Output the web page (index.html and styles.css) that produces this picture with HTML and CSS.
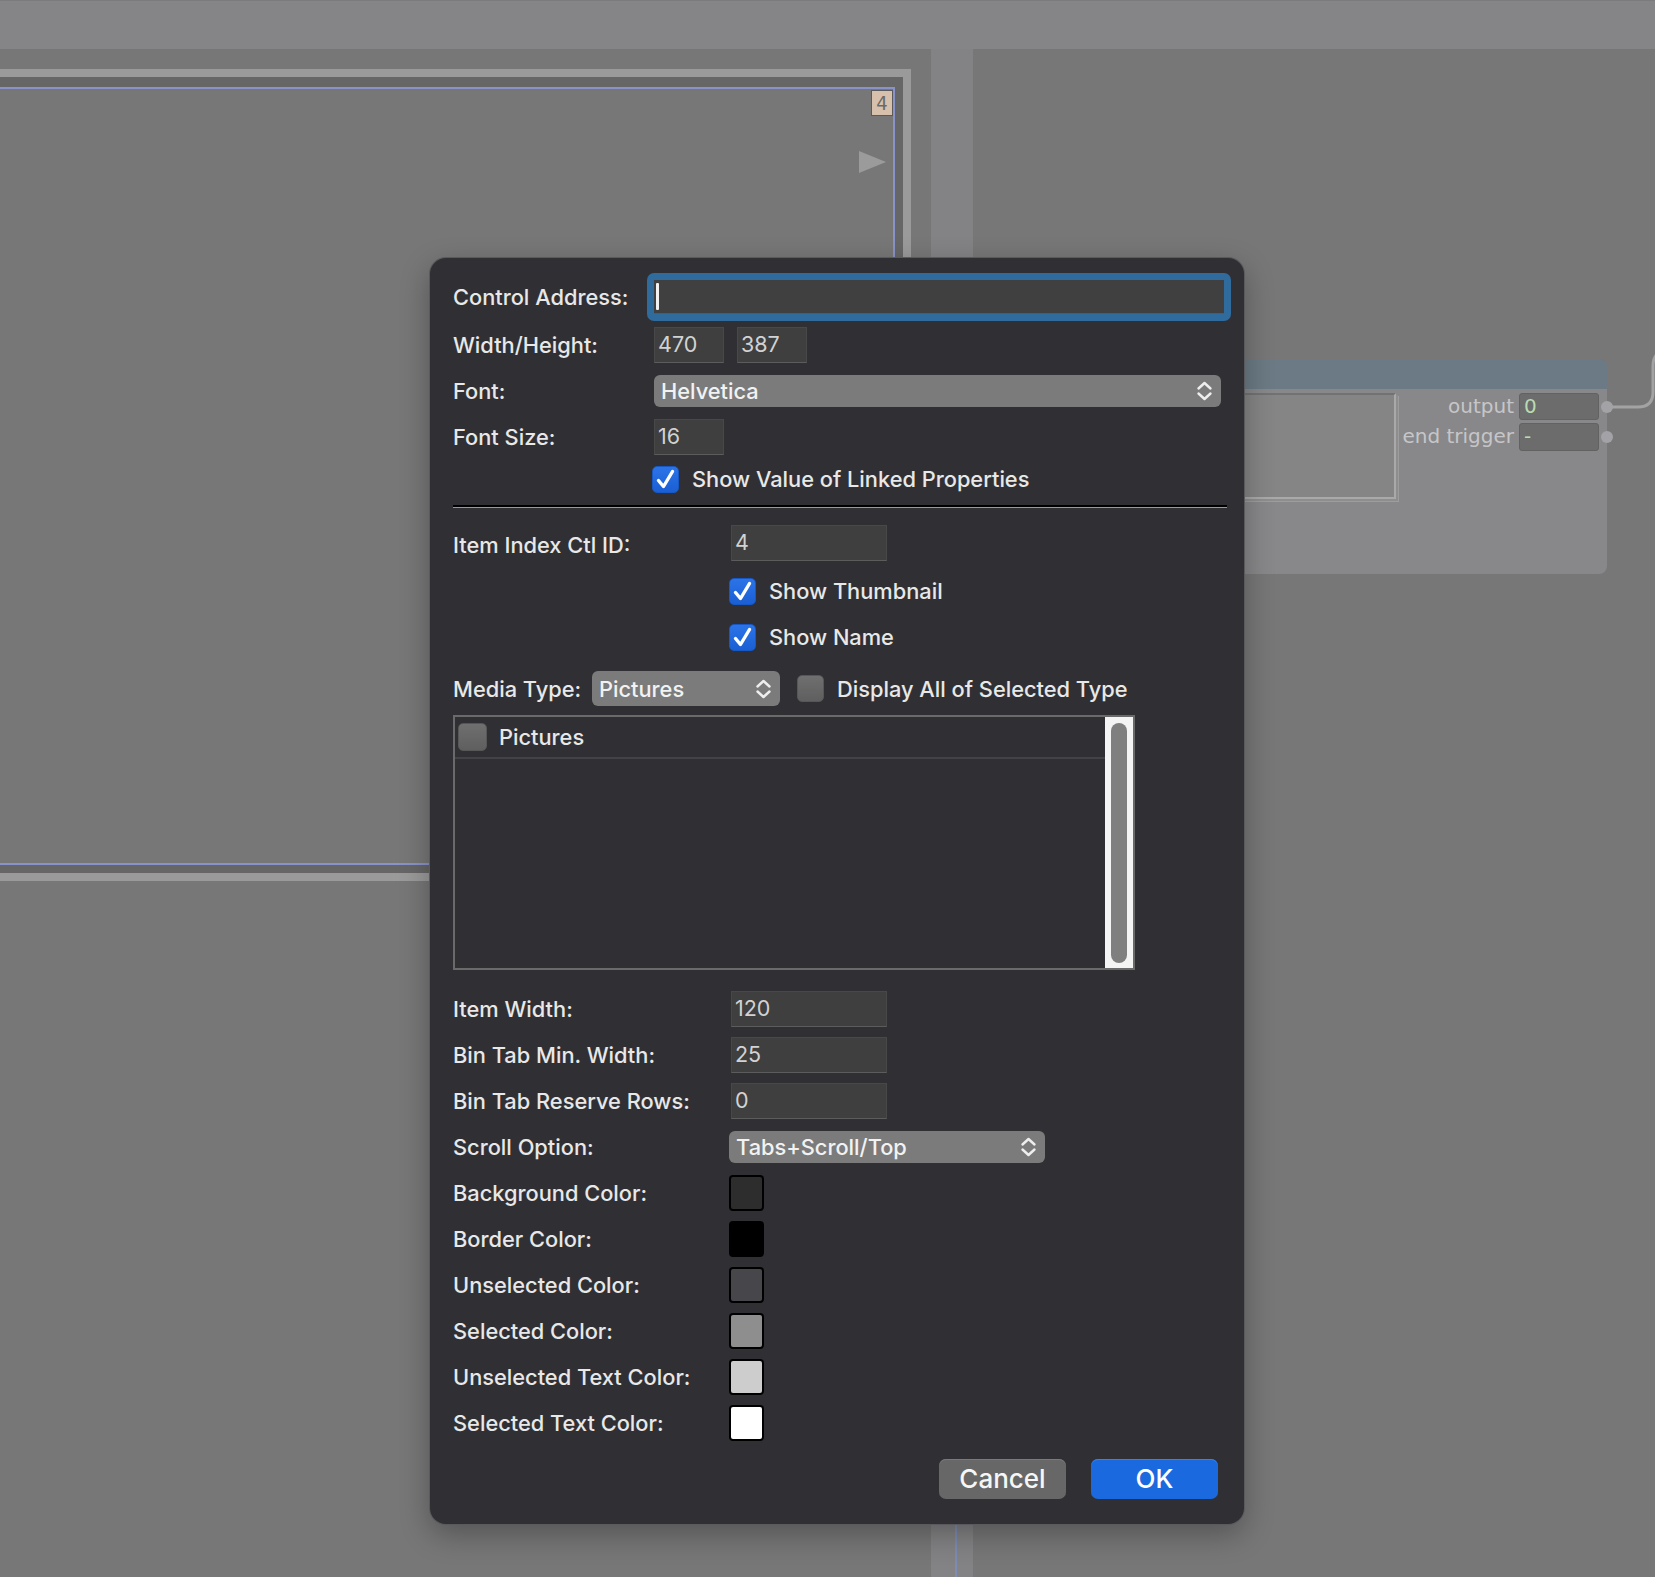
FILE: index.html
```html
<!DOCTYPE html>
<html>
<head>
<meta charset="utf-8">
<title>Media Bin Properties</title>
<link rel="stylesheet" href="styles.css">
</head>
<body>
<div class="stage">
  <div class="topbar"></div>
  <div class="strip"></div>
  <div class="strip-line"></div>

  <div class="frame">
    <div class="frame-inner">
      <span class="badge">4</span>
      <span class="play"></span>
    </div>
  </div>

  <div class="node">
    <div class="node-head"></div>
    <div class="node-body">
      <div class="preview"></div>
      <div class="ports">
        <div class="port"><span class="port-name">output</span><span class="port-val">0</span><span class="dot"></span></div>
        <div class="port"><span class="port-name">end trigger</span><span class="port-val">-</span><span class="dot"></span></div>
      </div>
    </div>
  </div>

  <svg class="wire" width="60" height="90" viewBox="0 0 60 90">
    <path d="M7 77 H38 Q53 77 53 62 V36 Q53 24 62 22" fill="none" stroke="#a3a3a5" stroke-width="3"/>
  </svg>

  <div class="dialog">
    <div class="row r-ctl">
      <span class="lbl w1">Control Address:</span>
      <div class="focus"><div class="field"><span class="caret"></span></div></div>
    </div>
    <div class="row r-wh">
      <span class="lbl w1">Width/Height:</span>
      <div class="num sm">470</div>
      <div class="num sm">387</div>
    </div>
    <div class="row r-font">
      <span class="lbl w1">Font:</span>
      <div class="popup p-font"><span>Helvetica</span>
        <svg class="chev" width="17" height="22" viewBox="0 0 17 22"><path d="M2.5 8.5 L8.5 3 L14.5 8.5 M2.5 13.5 L8.5 19 L14.5 13.5" fill="none" stroke="#eeeeee" stroke-width="2.4" stroke-linecap="round" stroke-linejoin="round"/></svg>
      </div>
    </div>
    <div class="row r-fs">
      <span class="lbl w1">Font Size:</span>
      <div class="num sm">16</div>
    </div>
    <div class="row r-chk1">
      <span class="cb on">
        <svg width="27" height="27" viewBox="0 0 27 27"><path d="M6.5 14.5 L11.5 20.5 L20.5 5.5" fill="none" stroke="#ffffff" stroke-width="3.4" stroke-linecap="round" stroke-linejoin="round"/></svg>
      </span>
      <span class="cb-text">Show Value of Linked Properties</span>
    </div>
    <div class="sep"></div>

    <div class="row r-idx">
      <span class="lbl w2">Item Index Ctl ID:</span>
      <div class="num md">4</div>
    </div>
    <div class="row r-thumb">
      <span class="cb on">
        <svg width="27" height="27" viewBox="0 0 27 27"><path d="M6.5 14.5 L11.5 20.5 L20.5 5.5" fill="none" stroke="#ffffff" stroke-width="3.4" stroke-linecap="round" stroke-linejoin="round"/></svg>
      </span>
      <span class="cb-text">Show Thumbnail</span>
    </div>
    <div class="row r-name">
      <span class="cb on">
        <svg width="27" height="27" viewBox="0 0 27 27"><path d="M6.5 14.5 L11.5 20.5 L20.5 5.5" fill="none" stroke="#ffffff" stroke-width="3.4" stroke-linecap="round" stroke-linejoin="round"/></svg>
      </span>
      <span class="cb-text">Show Name</span>
    </div>
    <div class="row r-media">
      <span class="lbl w3">Media Type:</span>
      <div class="popup p-media"><span>Pictures</span>
        <svg class="chev" width="17" height="22" viewBox="0 0 17 22"><path d="M2.5 8.5 L8.5 3 L14.5 8.5 M2.5 13.5 L8.5 19 L14.5 13.5" fill="none" stroke="#eeeeee" stroke-width="2.4" stroke-linecap="round" stroke-linejoin="round"/></svg>
      </div>
      <span class="cb off"></span>
      <span class="cb-text">Display All of Selected Type</span>
    </div>
    <div class="list">
      <div class="list-body">
        <div class="list-row"><span class="cb off"></span><span class="cb-text">Pictures</span></div>
      </div>
      <div class="scroll"><div class="thumb"></div></div>
    </div>

    <div class="row r-iw">
      <span class="lbl w2">Item Width:</span>
      <div class="num md">120</div>
    </div>
    <div class="row r-num">
      <span class="lbl w2">Bin Tab Min. Width:</span>
      <div class="num md">25</div>
    </div>
    <div class="row r-num">
      <span class="lbl w2">Bin Tab Reserve Rows:</span>
      <div class="num md">0</div>
    </div>
    <div class="row r-scroll">
      <span class="lbl w2b">Scroll Option:</span>
      <div class="popup p-scroll"><span>Tabs+Scroll/Top</span>
        <svg class="chev" width="17" height="22" viewBox="0 0 17 22"><path d="M2.5 8.5 L8.5 3 L14.5 8.5 M2.5 13.5 L8.5 19 L14.5 13.5" fill="none" stroke="#eeeeee" stroke-width="2.4" stroke-linecap="round" stroke-linejoin="round"/></svg>
      </div>
    </div>
    <div class="row r-sw first">
      <span class="lbl w2b">Background Color:</span>
      <span class="swatch sw-bg"></span>
    </div>
    <div class="row r-sw">
      <span class="lbl w2b">Border Color:</span>
      <span class="swatch sw-border"></span>
    </div>
    <div class="row r-sw">
      <span class="lbl w2b">Unselected Color:</span>
      <span class="swatch sw-unsel"></span>
    </div>
    <div class="row r-sw">
      <span class="lbl w2b">Selected Color:</span>
      <span class="swatch sw-sel"></span>
    </div>
    <div class="row r-sw">
      <span class="lbl w2b">Unselected Text Color:</span>
      <span class="swatch sw-unseltext"></span>
    </div>
    <div class="row r-sw">
      <span class="lbl w2b">Selected Text Color:</span>
      <span class="swatch sw-seltext"></span>
    </div>

    <div class="buttons">
      <button class="btn cancel">Cancel</button>
      <button class="btn ok">OK</button>
    </div>
  </div>
</div>
</body>
</html>
```

FILE: styles.css
```css
html, body {
  margin: 0;
  padding: 0;
  background: #777777;
}

.stage {
  position: relative;
  width: 1655px;
  height: 1577px;
  overflow: hidden;
  background: #777777;
  font-family: Inter, "Noto Sans", "Liberation Sans", sans-serif;
}

/* ---------- background canvas ---------- */
.topbar {
  position: absolute;
  left: 0;
  top: 0;
  width: 100%;
  height: 49px;
  background: #858587;
  border-top: 1px solid #7b7b7d;
  box-sizing: border-box;
}

.strip {
  position: absolute;
  left: 931px;
  top: 49px;
  width: 42px;
  bottom: 0;
  background: #838385;
}

.strip-line {
  position: absolute;
  left: 955px;
  top: 1500px;
  width: 2px;
  bottom: 0;
  background: #7d8bb5;
}

.frame {
  position: absolute;
  left: -10px;
  top: 69px;
  width: 921px;
  height: 812px;
  box-sizing: border-box;
  border: 8px solid #9a9a9a;
  background: #666666;
  padding: 10px 8px 8px 0;
}

.frame-inner {
  position: relative;
  height: 100%;
  box-sizing: border-box;
  border: 2px solid #8a93c9;
  background: #777777;
}

.badge {
  position: absolute;
  right: 0;
  top: 1px;
  width: 22px;
  height: 26px;
  box-sizing: border-box;
  background: #d8c1ac;
  border: 1px solid #5a5a5a;
  color: #6a6a6a;
  font-family: "DejaVu Sans Condensed", "DejaVu Sans", sans-serif;
  font-size: 20px;
  line-height: 24px;
  text-align: center;
}

.play {
  position: absolute;
  right: 7px;
  top: 62px;
  width: 0;
  height: 0;
  border-left: 27px solid #9b9b9b;
  border-top: 11px solid transparent;
  border-bottom: 11px solid transparent;
}

.node {
  position: absolute;
  left: 1200px;
  top: 359px;
  width: 407px;
}

.node-head {
  height: 30px;
  background: #6b7a84;
  border-radius: 8px 8px 0 0;
}

.node-body {
  height: 185px;
  box-sizing: border-box;
  background: #88888a;
  border-radius: 0 0 8px 8px;
  padding-top: 4px;
  display: flex;
  justify-content: space-between;
  align-items: flex-start;
}

.preview {
  width: 196px;
  height: 106px;
  box-sizing: border-box;
  background: #858585;
  border: 2px solid #a9a9a9;
  border-top-color: #727272;
  border-left: none;
  box-shadow: 2px 2px 0 0 #8e8e8e, 3px 3px 0 0 #9d9d9d;
}

.ports {
  display: flex;
  flex-direction: column;
  gap: 3px;
  margin-right: -6px;
}

.port {
  display: flex;
  align-items: center;
  justify-content: flex-end;
  height: 27px;
}

.port + .port {
  height: 28px;
}

.port-name {
  font-family: "DejaVu Sans", sans-serif;
  font-size: 20px;
  line-height: 24px;
  color: #c6c6c8;
  margin-right: 5px;
  margin-top: -2px;
}

.port-val {
  width: 80px;
  height: 100%;
  box-sizing: border-box;
  background: #6c6c6c;
  border: 1px solid #626262;
  border-radius: 3px;
  padding-left: 4px;
  color: #b8dbb3;
  font-family: "DejaVu Sans", sans-serif;
  font-size: 20px;
  line-height: 24px;
}

.dot {
  width: 12px;
  height: 12px;
  margin-left: 2px;
  border-radius: 50%;
  background: #a3a3a7;
}

.wire {
  position: absolute;
  left: 1600px;
  top: 330px;
}

/* ---------- dialog ---------- */
.dialog {
  position: absolute;
  left: 430px;
  top: 258px;
  width: 814px;
  height: 1266px;
  box-sizing: border-box;
  padding: 15px 13px 0 23px;
  background: #303034;
  border-radius: 16px;
  box-shadow: 0 0 0 1px #5a5a5e, 0 10px 30px rgba(0, 0, 0, 0.3);
  display: flex;
  flex-direction: column;
  color: #e6e6e6;
}

.row {
  display: flex;
  align-items: center;
  flex: none;
}

.lbl {
  flex: none;
  font-size: 21.8px;
  font-weight: 500;
  color: #e8e8e8;
  white-space: nowrap;
}

.w1 { width: 201px; }
.w2 { width: 278px; }
.w2b { width: 276px; }
.w3 { width: 139px; }

.r-ctl { height: 48px; }
.r-wh { height: 36px; margin-top: 6px; }
.r-font { height: 32px; margin-top: 12px; }
.r-fs { height: 36px; margin-top: 12px; }
.r-chk1 { height: 28px; margin-top: 10px; padding-left: 199px; }
.r-idx { height: 36px; margin-top: 17px; }
.r-thumb { height: 28px; margin-top: 16px; padding-left: 276px; }
.r-name { height: 28px; margin-top: 18px; padding-left: 276px; }
.r-media { height: 35px; margin-top: 20px; }
.r-iw { height: 36px; margin-top: 21px; }
.r-num { height: 36px; margin-top: 10px; }
.r-scroll { height: 32px; margin-top: 12px; }
.r-sw { height: 36px; margin-top: 10px; }
.r-sw.first { margin-top: 12px; }

.r-idx .lbl { margin-top: 4px; }

.focus {
  margin-left: -7px;
  width: 584px;
  height: 48px;
  box-sizing: border-box;
  padding: 7px;
  background: #2f6b9d;
  border-radius: 7px;
}

.field {
  height: 100%;
  box-sizing: border-box;
  background: #404040;
  border-bottom: 1px solid #595959;
  display: flex;
  align-items: center;
  padding-left: 2px;
}

.caret {
  width: 3px;
  height: 27px;
  background: #f2f2f2;
  border-radius: 1px;
}

.num {
  height: 36px;
  box-sizing: border-box;
  background: #3f3f3f;
  border: 1px solid #484848;
  border-bottom-color: #5c5c5c;
  padding-left: 3px;
  font-size: 21.5px;
  line-height: 32px;
  color: #d2d2d2;
}

.num.sm { width: 70px; }
.num.sm + .num.sm { margin-left: 13px; }
.num.md { width: 156px; }

.popup {
  height: 32px;
  box-sizing: border-box;
  background: #7b7b7b;
  border-radius: 6px;
  display: flex;
  align-items: center;
  justify-content: space-between;
  padding: 0 8px 0 7px;
  font-size: 21.8px;
  font-weight: 500;
  color: #f2f2f2;
}

.p-font { width: 567px; }
.p-media { width: 188px; height: 35px; }
.p-scroll { width: 316px; }

.chev { flex: none; }

.cb {
  flex: none;
  width: 27px;
  height: 27px;
  box-sizing: border-box;
  border-radius: 5px;
  display: flex;
  align-items: center;
  justify-content: center;
}

.cb.on {
  background: linear-gradient(#2b74e8, #1a5fd3);
  border: 1px solid #1758c4;
}

.cb.on svg {
  margin: -1px;
}

.cb.off {
  background: linear-gradient(#6f6f6f, #5f5f5f);
  border: 1px solid #575757;
}

.cb-text {
  margin-left: 13px;
  font-size: 21.8px;
  font-weight: 500;
  color: #e8e8e8;
  white-space: nowrap;
}

.r-media .cb.off {
  margin-left: 17px;
}

.sep {
  flex: none;
  margin-top: 12px;
  width: 774px;
  height: 3px;
  box-sizing: border-box;
  border-top: 2px solid #000000;
  border-bottom: 1px solid #9a9a9a;
}

.list {
  flex: none;
  margin-top: 9px;
  width: 682px;
  height: 255px;
  box-sizing: border-box;
  border: 2px solid #6a6a6a;
  background: #303034;
  display: flex;
}

.list-body {
  flex: 1;
}

.list-row {
  height: 40px;
  display: flex;
  align-items: center;
  padding-left: 3px;
  border-bottom: 2px solid #434347;
}

.list-row .cb {
  width: 29px;
  height: 28px;
}

.list-row .cb-text {
  margin-left: 12px;
}

.scroll {
  flex: none;
  width: 28px;
  background: #f4f4f4;
  box-sizing: border-box;
  padding: 6px 0 5px;
  display: flex;
  justify-content: center;
}

.thumb {
  width: 16px;
  background: #7f7f7f;
  border-radius: 8px;
}

.swatch {
  flex: none;
  margin-left: 0;
  width: 35px;
  height: 36px;
  box-sizing: border-box;
  border: 2px solid #000000;
  border-radius: 4px;
}

.sw-bg { background: #2d2d2d; }
.sw-border { background: #000000; }
.sw-unsel { background: #47474b; }
.sw-sel { background: #8e8e8e; }
.sw-unseltext { background: #cdcdcd; }
.sw-seltext { background: #ffffff; }

.buttons {
  flex: none;
  margin-top: 18px;
  margin-right: 13px;
  display: flex;
  justify-content: flex-end;
  gap: 25px;
}

.btn {
  width: 127px;
  height: 40px;
  border: none;
  border-radius: 7px;
  font-family: Inter, "Noto Sans", "Liberation Sans", sans-serif;
  font-size: 26px;
  font-weight: 500;
  line-height: 38px;
  color: #f6f6f6;
  padding: 0;
}

.btn.cancel {
  background: #676767;
  box-shadow: inset 0 1px 0 #7a7a7a;
}

.btn.ok {
  background: #1b69df;
  box-shadow: inset 0 1px 0 #3a80ea;
  color: #ffffff;
}
```
